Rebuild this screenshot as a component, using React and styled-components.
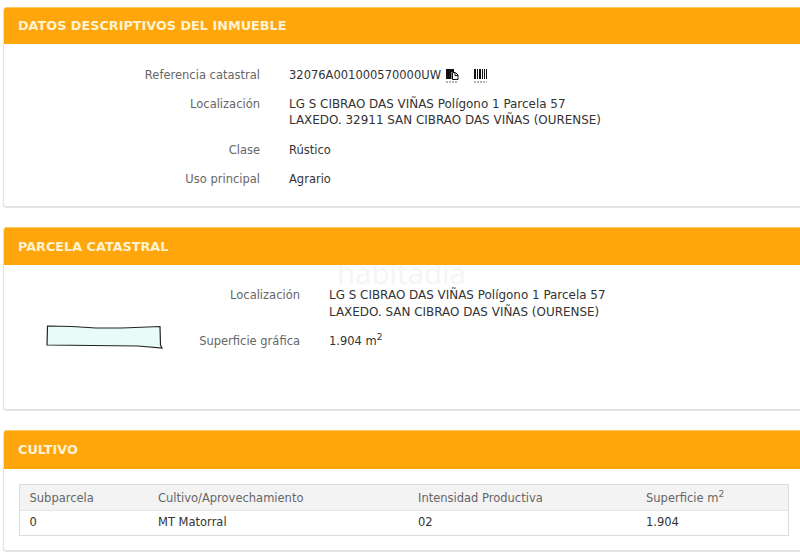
import React from 'react';
import styled, { createGlobalStyle } from 'styled-components';

const GlobalStyle = createGlobalStyle`
  html, body {
    margin: 0;
    padding: 0;
    background: #fff;
    overflow: hidden;
  }
  body {
    font-family: "DejaVu Sans", Verdana, sans-serif;
    font-size: 11.5px;
    color: #333;
  }
`;

const Page = styled.div`
  position: relative;
  width: 800px;
  height: 555px;
  padding: 7px 0 0 3px;
  box-sizing: border-box;
  overflow: hidden;
`;

const Panel = styled.section`
  width: 815px;
  margin-bottom: 19px;
  border: 1px solid #e2e2e2;
  border-top: 0;
  border-bottom: 2px solid #e2e2e2;
  border-radius: 4px;
  box-sizing: border-box;
  height: ${(p) => p.$height}px;
  overflow: hidden;
`;

const PanelHeader = styled.h2`
  position: relative;
  z-index: 1;
  margin: 0;
  height: ${(p) => p.$height || 38}px;
  display: flex;
  align-items: center;
  padding: 0 0 1px 14px;
  background: #ffa60d;
  color: #fff3d2;
  font-size: 12.8px;
  font-weight: 700;
  border-top: 1px solid #ffc766;
  box-sizing: border-box;
`;

const Fields = styled.dl`
  margin: 0;
  padding: ${(p) => p.$top}px 0 0 0;
  display: grid;
  grid-template-columns: ${(p) => p.$labelWidth}px 1fr;
  column-gap: 29px;
  row-gap: ${(p) => p.$gap}px;
  line-height: 16px;
`;

const Label = styled.dt`
  text-align: right;
  color: #666;
`;

const Value = styled.dd`
  margin: 0;
  color: #333;
  display: flex;
  align-items: center;
  flex-wrap: wrap;
`;

const Address = styled.div`
  font-size: 11.95px;
  line-height: ${(p) => p.$line}px;
  padding-bottom: ${(p) => p.$extra || 0}px;
`;

const Sup = styled.sup`
  font-size: 9px;
  line-height: 0;
`;

const IconSlot = styled.span`
  display: inline-flex;
  margin-left: ${(p) => p.$gap}px;
  margin-top: ${(p) => p.$top || 0}px;
`;

const ParcelBody = styled.div`
  display: flex;
  align-items: flex-start;
`;

const ParcelFigure = styled.div`
  flex: none;
  width: 193px;
  padding: 60px 0 0 42px;
  box-sizing: border-box;
  line-height: 0;
`;

const CropTable = styled.table`
  margin: 15px 0 0 15px;
  width: 769px;
  table-layout: fixed;
  border-collapse: collapse;
  border: 1px solid #dcdcdc;
`;

const HeadCell = styled.th`
  height: 25px;
  padding: 0 0 0 9.5px;
  text-align: left;
  font-weight: 400;
  color: #666;
  background: #f3f3f3;
  border-bottom: 1px solid #e6e6e6;
`;

const BodyCell = styled.td`
  height: 22px;
  padding: 0 0 2px 9.5px;
  color: #333;
`;

const Watermark = styled.div`
  position: absolute;
  left: 337px;
  top: 259px;
  font-family: "Open Sans", sans-serif;
  font-size: 29.5px;
  line-height: 28px;
  color: #f5f5f5;
  pointer-events: none;
`;

function CopyIcon() {
  return (
    <svg width="13" height="14" viewBox="0 0 13 14">
      <path d="M0 0h8v3H5.5v7H0z" fill="#111" />
      <path d="M6.5 3.5h3l2.5 2.5v4.5H6.5z" fill="#fff" stroke="#111" />
      <path d="M9 4v2.5h3" fill="none" stroke="#111" />
      <path d="M0 13h12" stroke="#666" strokeDasharray="2 1" />
    </svg>
  );
}

function BarcodeIcon() {
  return (
    <svg width="13" height="14" viewBox="0 0 13 14">
      <path d="M0 0h2v10H0zM3 0h1v10H3zM5 0h2v10H5zM8 0h1v10H8zM10 0h1v10h-1zM12 0h1v10h-1z" fill="#111" />
      <path d="M0 13h13" stroke="#666" strokeDasharray="2 1" />
    </svg>
  );
}

function ParcelShape() {
  return (
    <svg width="118" height="26" viewBox="0 0 118 26">
      <path
        d="M1.5 1 L26 1.5 L50 3 L76 3 L114 1.5 L114.5 20 L116 23 L92 21 L1 20 Z"
        fill="#e8fbf6"
        stroke="#222"
        strokeWidth="1.2"
      />
    </svg>
  );
}

export default function App() {
  return (
    <Page>
      <GlobalStyle />
      <Watermark>habitadia</Watermark>
      <Panel $height={201}>
        <PanelHeader $height={37}>DATOS DESCRIPTIVOS DEL INMUEBLE</PanelHeader>
        <Fields $top={23} $gap={13} $labelWidth={256}>
          <Label>Referencia catastral</Label>
          <Value>
            32076A001000570000UW
            <IconSlot $gap={5} $top={2}><CopyIcon /></IconSlot>
            <IconSlot $gap={15} $top={1}><BarcodeIcon /></IconSlot>
          </Value>
          <Label>Localización</Label>
          <Value>
            <Address $line={16} $extra={1}>
              LG S CIBRAO DAS VIÑAS Polígono 1 Parcela 57<br />
              LAXEDO. 32911 SAN CIBRAO DAS VIÑAS (OURENSE)
            </Address>
          </Value>
          <Label>Clase</Label>
          <Value>Rústico</Value>
          <Label>Uso principal</Label>
          <Value>Agrario</Value>
        </Fields>
      </Panel>

      <Panel $height={184}>
        <PanelHeader>PARCELA CATASTRAL</PanelHeader>
        <ParcelBody>
          <ParcelFigure><ParcelShape /></ParcelFigure>
          <Fields $top={22} $gap={12} $labelWidth={103}>
            <Label>Localización</Label>
            <Value>
              <Address $line={17}>
                LG S CIBRAO DAS VIÑAS Polígono 1 Parcela 57<br />
                LAXEDO. SAN CIBRAO DAS VIÑAS (OURENSE)
              </Address>
            </Value>
            <Label>Superficie gráfica</Label>
            <Value><span>1.904 m<Sup>2</Sup></span></Value>
          </Fields>
        </ParcelBody>
      </Panel>

      <Panel $height={122}>
        <PanelHeader $height={39}>CULTIVO</PanelHeader>
        <CropTable>
          <colgroup>
            <col width="129" />
            <col width="260" />
            <col width="228" />
            <col width="152" />
          </colgroup>
          <thead>
            <tr>
              <HeadCell>Subparcela</HeadCell>
              <HeadCell>Cultivo/Aprovechamiento</HeadCell>
              <HeadCell>Intensidad Productiva</HeadCell>
              <HeadCell>Superficie m<Sup>2</Sup></HeadCell>
            </tr>
          </thead>
          <tbody>
            <tr>
              <BodyCell>0</BodyCell>
              <BodyCell>MT Matorral</BodyCell>
              <BodyCell>02</BodyCell>
              <BodyCell>1.904</BodyCell>
            </tr>
          </tbody>
        </CropTable>
      </Panel>
    </Page>
  );
}
